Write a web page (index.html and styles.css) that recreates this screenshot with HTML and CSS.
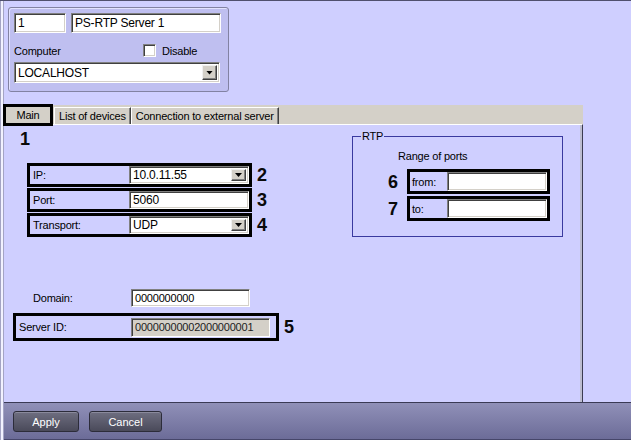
FILE: index.html
```html
<!DOCTYPE html>
<html lang="en">
<head>
  <meta charset="UTF-8">
  <title>PS-RTP Server settings</title>
  <link rel="stylesheet" href="styles.css">
</head>
<body>
<div class="window">

  <!-- Object header -->
  <div class="header">
    <div class="server-box">
      <div class="row">
        <div class="field id-field">1</div>
        <div class="field name-field">PS-RTP Server 1</div>
      </div>
      <div class="row options">
        <span class="computer-label">Computer</span>
        <span class="checkbox"></span>
        <span>Disable</span>
      </div>
      <div class="field combo host-combo">
        <span class="combo-text">LOCALHOST</span>
        <span class="drop"><i></i></span>
      </div>
    </div>
  </div>

  <!-- Tabs -->
  <div class="tabs">
    <div class="tab active">Main</div>
    <div class="tab">List of devices</div>
    <div class="tab">Connection to external server</div>
  </div>

  <div class="panel">
    <div class="left-col">
      <div class="mark mark-one">1</div>

      <div class="hl-group">
        <div class="hl-row">
          <div class="hl-box">
            <span class="lbl">IP:</span>
            <div class="field combo big">
              <span class="combo-text">10.0.11.55</span>
              <span class="drop"><i></i></span>
            </div>
          </div>
          <span class="mark">2</span>
        </div>
        <div class="hl-row">
          <div class="hl-box">
            <span class="lbl">Port:</span>
            <div class="field big">5060</div>
          </div>
          <span class="mark">3</span>
        </div>
        <div class="hl-row">
          <div class="hl-box">
            <span class="lbl">Transport:</span>
            <div class="field combo big">
              <span class="combo-text">UDP</span>
              <span class="drop"><i></i></span>
            </div>
          </div>
          <span class="mark">4</span>
        </div>
      </div>

      <div class="domain-row">
        <span class="lbl">Domain:</span>
        <div class="field">0000000000</div>
      </div>

      <div class="hl-row server-row">
        <div class="hl-box server-box-id">
          <span class="lbl">Server ID:</span>
          <div class="field disabled">00000000002000000001</div>
        </div>
        <span class="mark">5</span>
      </div>
    </div>

    <fieldset class="rtp">
      <legend>RTP</legend>
      <div class="range-title">Range of ports</div>
      <div class="port-row">
        <span class="mark">6</span>
        <div class="hl-box port-box">
          <span class="lbl">from:</span>
          <div class="field"></div>
        </div>
      </div>
      <div class="port-row">
        <span class="mark">7</span>
        <div class="hl-box port-box">
          <span class="lbl">to:</span>
          <div class="field"></div>
        </div>
      </div>
    </fieldset>
  </div>

  <!-- Bottom buttons -->
  <div class="footer">
    <button class="btn apply">Apply</button>
    <button class="btn cancel">Cancel</button>
  </div>

</div>
</body>
</html>
```

FILE: styles.css
```css
* {
  box-sizing: border-box;
}

body {
  margin: 0;
  background-color: #cfcfff;
  font-family: "Liberation Sans", Arial, sans-serif;
  font-size: 11px;
  letter-spacing: -0.2px;
  color: #000;
}

.window {
  width: 631px;
  height: 440px;
  overflow: hidden;
  display: flex;
  flex-direction: column;
  padding-left: 4px;
  border-top: 1px solid #50506e;
  box-shadow: inset 1px 0 #a4a4c4, inset 3px 0 #f2f2ff, inset 4px 0 #a4a4c4;
}

/* header box */
.header {
  height: 104px;
  flex-shrink: 0;
  padding: 6px 0 0 4px;
}

.server-box {
  width: 221px;
  height: 85px;
  padding: 5px 7px 0 5px;
  background-color: #bfbff0;
  border: 1px solid #8282a2;
  border-radius: 3px;
  box-shadow: inset 1px 1px #e2e2ff;
}

.row {
  display: flex;
  gap: 5px;
}

.options {
  margin-top: 11px;
  height: 13px;
  align-items: center;
  gap: 0;
}

.computer-label {
  width: 129px;
}

.checkbox {
  width: 13px;
  height: 13px;
  margin-right: 6px;
  background: #fff;
  border: 1px solid;
  border-color: #808080 #fff #fff #808080;
  box-shadow: inset 1px 1px #404040, inset -1px -1px #d4d0c8;
}

.field {
  height: 18px;
  background: #fff;
  border: 1px solid;
  border-color: #808080 #fff #fff #808080;
  box-shadow: inset 1px 1px #404040, inset -1px -1px #d4d0c8;
  padding: 0 3px;
  display: flex;
  align-items: center;
  white-space: nowrap;
}

.field.big {
  font-size: 12px;
}

.id-field {
  width: 52px;
  height: 20px;
  font-size: 12px;
}

.name-field {
  width: 150px;
  height: 20px;
  font-size: 12px;
}

.host-combo {
  margin-top: 5px;
  width: 206px;
  height: 21px;
  font-size: 12px;
}

.combo {
  padding-right: 2px;
}

.combo-text {
  flex: 1;
}

.drop {
  width: 15px;
  height: calc(100% - 4px);
  background: #d4d0c8;
  border: 1px solid;
  border-color: #f0f0f0 #404040 #404040 #f0f0f0;
  box-shadow: inset -1px -1px #808080;
  display: flex;
  align-items: center;
  justify-content: center;
}

.drop i {
  width: 7px;
  height: 4px;
  background: #000;
  clip-path: polygon(0 0, 100% 0, 50% 100%);
}

/* tabs */
.tabs {
  width: 579px;
  height: 19px;
  flex-shrink: 0;
  background-color: #d4d0c8;
  display: flex;
  align-items: flex-end;
}

.tab {
  height: 17px;
  padding: 0 4px;
  display: flex;
  align-items: center;
  border-top: 1px solid #fff;
  border-left: 1px solid #fff;
  border-right: 1px solid #404040;
  box-shadow: inset -1px 0 #808080;
  white-space: nowrap;
}

.tab.active {
  position: relative;
  z-index: 1;
  width: 50px;
  height: 22px;
  margin: 0 1px -2px -1px;
  justify-content: center;
  background-color: #d4d0c8;
  border: 3px solid #000;
  box-shadow: none;
}

/* main panel */
.panel {
  width: 579px;
  height: 278px;
  flex-shrink: 0;
  display: flex;
  align-items: flex-start;
  border-top: 1px solid #fff;
  border-right: 1px solid #3c3c50;
  box-shadow: inset -2px 0 #bdbdd0;
}

.left-col {
  width: 348px;
  flex-shrink: 0;
}

.mark {
  font-size: 18px;
  line-height: 18px;
  font-weight: bold;
  letter-spacing: 0;
  color: #0a0a0a;
}

.mark-one {
  margin: 5px 0 0 16px;
}

.hl-group {
  margin: 15px 0 0 23px;
  display: flex;
  flex-direction: column;
  gap: 1px;
}

.hl-row {
  display: flex;
  align-items: center;
  gap: 5px;
}

.hl-box {
  width: 225px;
  height: 24px;
  border: 3px solid #000;
  display: grid;
  grid-template-columns: 99px 120px;
  align-items: center;
}

.lbl {
  padding-left: 3px;
}

.domain-row {
  margin: 49px 0 0 23px;
  width: 225px;
  height: 24px;
  border: 3px solid transparent;
  display: grid;
  grid-template-columns: 101px 119px;
  align-items: center;
}

.server-row {
  margin: 3px 0 0 9px;
}

.server-box-id {
  width: 266px;
  height: 28px;
  grid-template-columns: 115px 139px;
}

.server-box-id .field {
  height: 19px;
}

.field.disabled {
  background: #d4d0c8;
  color: #222;
}

/* RTP group */
.rtp {
  margin: 5px 0 0 0;
  padding: 0;
  width: 211px;
  height: 107px;
  min-width: 0;
  border: 1px solid #3a3aa0;
}

.rtp legend {
  margin-left: 8px;
  padding: 0 1px;
  line-height: 13px;
}

.range-title {
  margin: 7px 0 0 45px;
  line-height: 13px;
}

.port-row {
  display: flex;
  align-items: center;
  margin: 6px 0 0 35px;
}

.port-row + .port-row {
  margin-top: 2px;
}

.port-row .mark {
  width: 11px;
  margin-right: 8px;
}

.port-box {
  width: 143px;
  height: 25px;
  grid-template-columns: 37px 100px;
}

.port-box .lbl {
  padding-left: 2px;
}

.port-box .field {
  height: 19px;
}

/* footer */
.footer {
  height: 38px;
  flex-shrink: 0;
  display: flex;
  gap: 10px;
  padding: 8px 0 0 9px;
  background: linear-gradient(#9090b8, #6c6c98);
  border-top: 1px solid #3a3a55;
  border-bottom: 1px solid #46466a;
}

.btn {
  height: 21px;
  padding: 0;
  font-family: "Liberation Sans", Arial, sans-serif;
  font-size: 11px;
  color: #fff;
  background: linear-gradient(#6e6e80, #4a4a5a);
  border: 1px solid #2c2c3a;
  border-radius: 3px;
  box-shadow: inset 0 1px #8a8a9c;
}

.apply {
  width: 66px;
}

.cancel {
  width: 73px;
}
```
